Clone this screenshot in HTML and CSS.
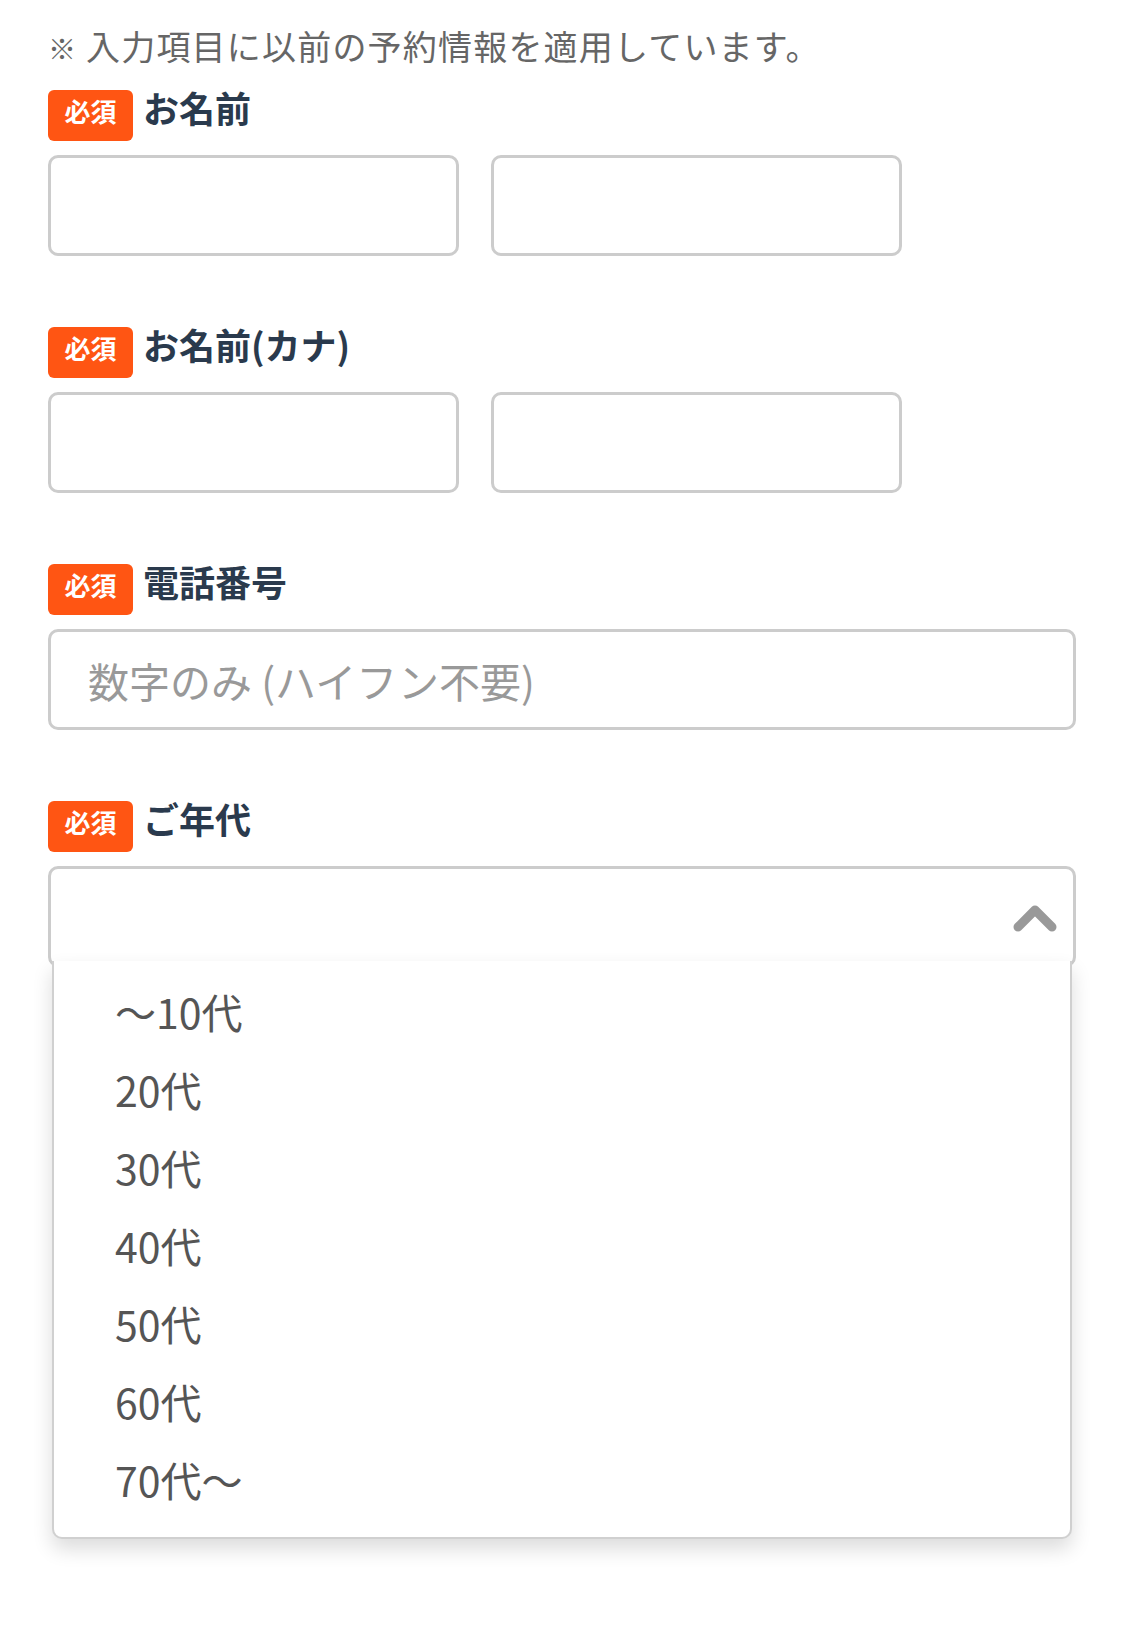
FILE: index.html
```html
<!DOCTYPE html>
<html lang="ja">
<head>
    <meta charset="UTF-8">
    <meta name="viewport" content="width=device-width, initial-scale=1.0">
    <title>予約情報の入力</title>
    <link rel="stylesheet" href="styles.css">
</head>
<body>
    <main class="form">
        <p class="note"><span class="mark">※</span> 入力項目に以前の予約情報を適用しています。</p>

        <div class="field">
            <div class="field-head">
                <span class="required">必須</span>
                <label class="field-label">お名前</label>
            </div>
            <div class="pair">
                <input type="text" class="text-input half">
                <input type="text" class="text-input half">
            </div>
        </div>

        <div class="field">
            <div class="field-head">
                <span class="required">必須</span>
                <label class="field-label">お名前(カナ)</label>
            </div>
            <div class="pair">
                <input type="text" class="text-input half">
                <input type="text" class="text-input half">
            </div>
        </div>

        <div class="field">
            <div class="field-head">
                <span class="required">必須</span>
                <label class="field-label" for="tel">電話番号</label>
            </div>
            <input type="tel" id="tel" class="text-input" placeholder="数字のみ (ハイフン不要)">
        </div>

        <div class="field">
            <div class="field-head">
                <span class="required">必須</span>
                <label class="field-label">ご年代</label>
            </div>
            <div class="select open">
                <div class="select-box">
                    <svg class="chevron" width="52" height="40" viewBox="0 0 52 40">
                        <polyline points="9,29 26,12 43,29" fill="none" stroke="#999" stroke-width="9" stroke-linecap="round" stroke-linejoin="round"/>
                    </svg>
                </div>
                <ul class="options">
                    <li>〜10代</li>
                    <li>20代</li>
                    <li>30代</li>
                    <li>40代</li>
                    <li>50代</li>
                    <li>60代</li>
                    <li>70代〜</li>
                </ul>
            </div>
        </div>
    </main>
</body>
</html>
```

FILE: styles.css
```css
body {
    margin: 0;
    background: #fff;
    font-family: "Noto Sans CJK JP", "Noto Sans", sans-serif;
    color: #333;
}

.form {
    padding: 0 49px 0 48px;
}

.note {
    height: 40px;
    margin: 26px 0 24px;
    font-size: 34px;
    letter-spacing: 1.2px;
    line-height: 40px;
    color: #666;
}

.note .mark {
    font-size: 28px;
    line-height: 1;
}

.field {
    margin-bottom: 71px;
}

.field-head {
    display: flex;
    align-items: flex-start;
    margin-bottom: 14px;
}

.required {
    display: flex;
    align-items: center;
    justify-content: center;
    box-sizing: border-box;
    width: 85px;
    height: 51px;
    padding-bottom: 10px;
    border-radius: 6px;
    background-color: #ff5513;
    color: #fff;
    font-size: 26px;
    font-weight: bold;
    line-height: 26px;
}

.field-label {
    margin-left: 10px;
    font-size: 36px;
    font-weight: bold;
    line-height: 34px;
    color: #2a3a4d;
}

.pair {
    display: flex;
    gap: 32px;
}

.text-input {
    display: block;
    box-sizing: border-box;
    width: 100%;
    height: 101px;
    margin: 0;
    padding: 0 37px;
    border: 3px solid #cccccc;
    border-radius: 10px;
    background: #fff;
    font-family: inherit;
    font-size: 41px;
    color: #333;
    outline: none;
}

.text-input.half {
    flex: 0 0 40%;
}

.text-input::placeholder {
    color: #999;
}

/* custom select, shown open */
.select-box {
    box-sizing: border-box;
    height: 101px;
    display: flex;
    align-items: center;
    justify-content: flex-end;
    padding-right: 12px;
    border: 3px solid #cccccc;
    border-radius: 10px;
    background: #fff;
}

.chevron {
    display: block;
    margin-top: 2px;
}

.options {
    position: relative;
    z-index: 1;
    margin: -6px 4px 0;
    padding: 11px 0 19px;
    list-style: none;
    background: #fff;
    border: 2px solid #d0d0d0;
    border-top: none;
    border-radius: 0 0 10px 10px;
    box-shadow: 0 10px 20px rgba(0, 0, 0, 0.14);
}

.options li {
    height: 78px;
    padding-left: 61px;
    font-size: 41px;
    line-height: 78px;
    color: #555;
}
```
